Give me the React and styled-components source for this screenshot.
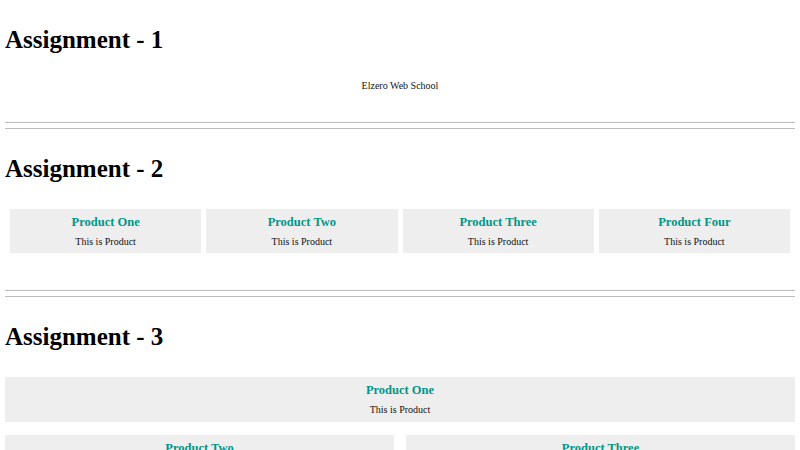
import React from 'react';
import styled, { createGlobalStyle } from 'styled-components';

const GlobalStyle = createGlobalStyle`
    body {
        margin: 0 5px;
        font-family: "Liberation Serif", "Times New Roman", serif;
        font-size: 10px;
        color: #111;
        background: #fff;
    }
`;

const Heading = styled.h1`
    margin: 26px 0;
    font-size: 25px;
    font-weight: bold;
    color: #000;
`;

const Center = styled.div`
    text-align: center;
    line-height: 11.5px;
`;

const Divider = styled.div`
    margin-top: ${(p) => p.$top}px;
    height: 5px;
    border-top: 1px solid #bbb;
    border-bottom: 1px solid #bbb;
`;

const FourCols = styled.div`
    display: grid;
    grid-template-columns: repeat(4, 1fr);
    gap: 5px;
    padding: 0 5px;
`;

const TwoCols = styled.div`
    display: grid;
    grid-template-columns: repeat(2, 1fr);
    gap: 13px 12px;
`;

const Card = styled.div`
    background: #eee;
    text-align: center;
    padding: 6px 5px 6px;
    grid-column: ${(p) => (p.$wide ? '1 / -1' : 'auto')};
`;

const CardTitle = styled.h3`
    margin: 0 0 6px;
    font-size: 12.5px;
    font-weight: bold;
    color: #009688;
`;

const CardText = styled.p`
    margin: 0;
    font-size: 10px;
    line-height: 11.5px;
`;

const names = ['One', 'Two', 'Three', 'Four'];

const Product = ({ name, wide }) => (
    <Card $wide={wide}>
        <CardTitle>Product {name}</CardTitle>
        <CardText>This is Product</CardText>
    </Card>
);

const App = () => {
    return (
        <>
            <GlobalStyle />
            <Heading>Assignment - 1</Heading>
            <Center>Elzero Web School</Center>
            <Divider $top={30} />

            <Heading>Assignment - 2</Heading>
            <FourCols>
                {names.map((n) => (
                    <Product key={n} name={n} />
                ))}
            </FourCols>
            <Divider $top={37} />

            <Heading>Assignment - 3</Heading>
            <TwoCols>
                <Product name="One" wide />
                <Product name="Two" />
                <Product name="Three" />
                <Product name="Four" wide />
            </TwoCols>
        </>
    );
};

export default App;
